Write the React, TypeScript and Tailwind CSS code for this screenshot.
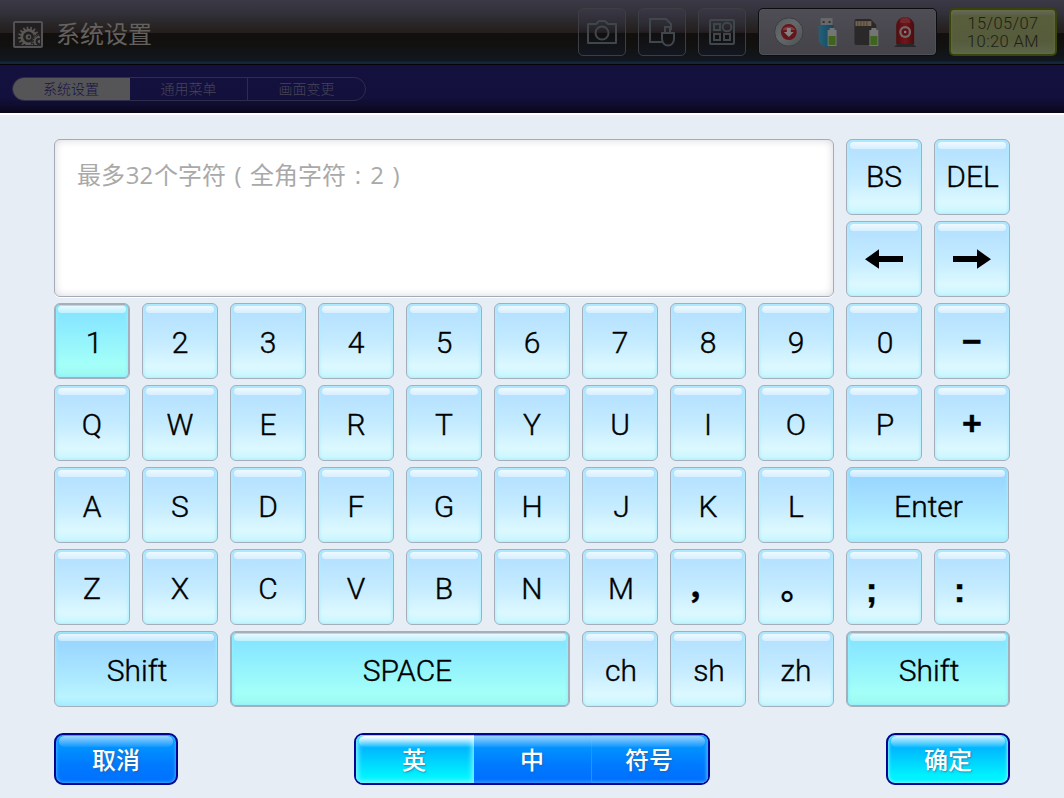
import React from "react";

type Tone = "light" | "blue" | "active";

const keyTone: Record<Tone, string> = {
  light:
    "border-[#a5afbb] bg-[linear-gradient(#aee0ff_0%,#b8e3ff_20%,#c4ebff_50%,#dcf8ff_84%,#c9f7ff_100%)] shadow-[inset_0_0_3px_1px_#aeeeff]",
  blue:
    "border-[#a5afbb] bg-[linear-gradient(#92d5ff_0%,#9dd9ff_22%,#a9e6ff_55%,#baf4ff_88%,#a5edff_100%)] shadow-[inset_0_0_3px_1px_#a3ecff]",
  active:
    "border-[#a5afbb] bg-[linear-gradient(#83e3ff_0%,#8ae9ff_24%,#97f6fb_55%,#a3fff8_82%,#9bf8f1_100%)] shadow-[inset_0_0_0_1px_#a5afbb,inset_0_0_3px_2px_#90f0ff]",
};

function Key({
  children,
  w = "w-[76px]",
  tone = "light",
  text = "pt-1 text-[30px]",
}: {
  children: React.ReactNode;
  w?: string;
  tone?: Tone;
  text?: string;
}) {
  return (
    <button
      className={`relative flex h-[76px] shrink-0 items-center justify-center rounded-[6px] border leading-none text-black [-webkit-text-stroke:0.4px_#000] ${w} ${keyTone[tone]} ${text}`}
    >
      <span className="absolute inset-x-[3px] top-[2px] h-[7px] rounded-[4px] bg-linear-to-b from-white/80 to-white/45" />
      {children}
    </button>
  );
}

function Row({ children }: { children: React.ReactNode }) {
  return <div className="flex gap-3">{children}</div>;
}

function Letters({ value }: { value: string }) {
  return (
    <>
      {value.split("").map((c) => (
        <Key key={c}>{c}</Key>
      ))}
    </>
  );
}

const symbolText = "font-['Liberation_Sans'] font-bold text-[34px] pb-px";

function Arrow({ flip = false }: { flip?: boolean }) {
  return (
    <svg width="38" height="20" viewBox="0 0 38 20" className={flip ? "-scale-x-100" : ""}>
      <path d="M0 10.3 14 0.3V7H38V13H14V19.8Z" fill="#000" />
    </svg>
  );
}

function HeaderButton({ children }: { children: React.ReactNode }) {
  return (
    <button className="flex h-12 w-12 items-center justify-center rounded-[5px] border border-[#3d3e44] bg-[linear-gradient(#3b3846_0%,#2c2a31_35%,#231e20_51%,#110f0f_52%,#141720_100%)]">
      <svg width="48" height="48" viewBox="0 0 48 48" fill="none" stroke="#40474c" strokeWidth="2" className="shrink-0">
        {children}
      </svg>
    </button>
  );
}

function gearPath(cx: number, cy: number, outer: number, inner: number, teeth: number) {
  const pts: string[] = [];
  for (let i = 0; i < teeth; i++) {
    const base = (i / teeth) * Math.PI * 2;
    const step = (Math.PI * 2) / teeth;
    [
      [inner, 0],
      [inner, 0.45],
      [outer, 0.52],
      [outer, 0.93],
    ].forEach(([r, f]) => {
      const a = base + step * f;
      pts.push(`${(cx + r * Math.cos(a)).toFixed(2)} ${(cy + r * Math.sin(a)).toFixed(2)}`);
    });
  }
  return `M${pts.join("L")}Z`;
}

function SettingsIcon() {
  return (
    <svg width="30" height="27" viewBox="0 0 30 27">
      <defs>
        <clipPath id="frame">
          <rect x="3" y="3" width="24" height="21" />
        </clipPath>
      </defs>
      <rect x="1" y="1" width="28" height="25" rx="1" fill="#211f20" stroke="#525256" strokeWidth="2" />
      <g clipPath="url(#frame)">
        <path d={gearPath(15.5, 16, 10.5, 8, 16)} fill="#5a5755" />
        <circle cx="15.5" cy="16" r="5.400" fill="#211f20" />
        <circle cx="15.5" cy="16" r="2.800" fill="#5a5755" />
        <circle cx="16" cy="16" r="1.200" fill="#211f20" />
        <path d={gearPath(26, 20.5, 7.8, 5.7, 12)} fill="#5a5755" stroke="#211f20" strokeWidth="1" />
        <circle cx="26" cy="20.500" r="3.400" fill="#211f20" />
        <circle cx="26.500" cy="20.500" r="1.800" fill="#5a5755" />
      </g>
    </svg>
  );
}

function StatusIcons() {
  return (
    <svg width="178" height="48" viewBox="0 0 178 48">
      <defs>
        <linearGradient id="disc" x1="0" y1="0" x2="1" y2="1">
          <stop offset="0" stopColor="#55585a" />
          <stop offset="0.45" stopColor="#66696b" />
          <stop offset="1" stopColor="#4c4f51" />
        </linearGradient>
        <linearGradient id="usb" x1="0" x2="1">
          <stop offset="0" stopColor="#23607a" />
          <stop offset="1" stopColor="#16465c" />
        </linearGradient>
        <linearGradient id="lamp" x1="0" x2="1">
          <stop offset="0" stopColor="#4f0d10" />
          <stop offset="0.5" stopColor="#74151a" />
          <stop offset="1" stopColor="#4b0b0e" />
        </linearGradient>
      </defs>
      <circle cx="30" cy="23" r="14.3" fill="url(#disc)" stroke="#393c3e" strokeWidth="1" />
      <circle cx="30" cy="23" r="8" fill="#65161b" />
      <path d="M23.5 21a7 5.5 0 0 1 13 0Z" fill="#7e3a3e" />
      <path d="M28 19h4v4h3l-5 5-5-5h3Z" fill="#858082" />

      <path d="M62 9h12v8H62Z" fill="#66686a" />
      <path d="M64 12h2v2h-2ZM70 12h2v2h-2Z" fill="#303236" />
      <path d="M60 16h15v16a7 6 0 0 1-7 6 8 8 0 0 1-8-7Z" fill="url(#usb)" />
      <path d="M71 19h5v2h2v16h-9V21h2Z" fill="#747575" />
      <rect x="70" y="27" width="7" height="9" fill="#3f651d" />

      <path d="M96 12a2 2 0 0 1 2-2h14l6 6v20H98a2 2 0 0 1-2-2Z" fill="#2a2828" />
      <path d="M97 12h16v5H97Z" fill="#73624f" />
      <path d="M99.500 12v5M102.500 12v5M105.500 12v5M108.500 12v5" stroke="#4d4237" strokeWidth="1" />
      <path d="M113 19h5v2h2v16h-9V21h2Z" fill="#747575" />
      <rect x="112" y="27" width="7" height="9" fill="#3f651d" />

      <path d="M138 35V16a9 8 0 0 1 18 0v19Z" fill="url(#lamp)" />
      <path d="M142 12a5 3.500 0 0 1 10 0v2h-10Z" fill="#73282c" />
      <circle cx="147" cy="23" r="6" fill="#73686a" />
      <circle cx="147" cy="23" r="3.700" fill="#5e1216" />
      <circle cx="147" cy="23" r="1.300" fill="#8b8082" />
      <path d="M139 35h16l3 3h-22Z" fill="#28282b" />
    </svg>
  );
}

function Gloss() {
  return (
    <span className="absolute inset-x-[3px] top-[1px] h-[11px] rounded-[6px] bg-linear-to-b from-white/75 to-white/5" />
  );
}

const label =
  "relative top-[1.5px] text-[24px] leading-none font-medium text-white [text-shadow:1px_1px_2px_#30588099]";

export default function App() {
  return (
    <div className="flex h-[798px] w-[1064px] flex-col overflow-hidden bg-[#e6edf5] font-['Roboto','Noto_Sans_CJK_SC',sans-serif]">
      <header className="flex h-[65px] shrink-0 items-start border-b border-[#050507] bg-[linear-gradient(#3a3945_0px,#33323c_12px,#292627_24px,#241e1d_33px,#120f0e_33px,#11110f_45px,#111721_61px,#14273a_62px,#14273a_64px)]">
        <div className="flex flex-1 items-center gap-[13px] pt-4 pl-[13px]">
          <SettingsIcon />
          <h1 className="pt-px text-[24px] leading-[36px] text-[#64615f]">系统设置</h1>
        </div>
        <div className="flex gap-3 pt-2">
          <HeaderButton>
            <path d="M10 16h8l3-3h6l3 3h8v19H10Z" strokeLinejoin="round" />
            <circle cx="24" cy="25" r="6.500" />
          </HeaderButton>
          <HeaderButton>
            <path d="M24 34H12V11h16l5 5v6" />
            <path d="M24 25h12v6a6 6.500 0 0 1-12 0ZM27 25v-6h5v6" />
          </HeaderButton>
          <HeaderButton>
            <rect x="12" y="12" width="24" height="24" rx="1" />
            <path d="M16 16h6v6h-6ZM16 26h6v6h-6ZM26 26h6v6h-6Z" />
            <circle cx="29" cy="19" r="4.300" />
          </HeaderButton>
        </div>
        <div className="mt-2 ml-3 flex h-12 w-[179px] rounded-[5px] border border-[#0c0d10] bg-linear-to-b from-[#4f4d55] to-[#444349] shadow-[inset_0_0_0_1px_#505057]">
          <StatusIcons />
        </div>
        <div className="mt-2 mr-[7px] ml-3 flex h-12 w-[108px] flex-col items-center justify-center rounded-[5px] border-2 border-[#39430c] bg-[linear-gradient(#656855_0px,#5e624c_4px,#585d3b_6px,#565b3b_70%,#5c654a_100%)] pt-[2px] text-[16.5px] leading-[18px] tracking-[0.4px] text-[#1d2016] shadow-[inset_0_0_3px_#68763b]">
          <span className="font-light">15/05/07</span>
          <span className="font-light">10:20 AM</span>
        </div>
      </header>

      <nav className="h-12 shrink-0 bg-[linear-gradient(#15113f_0px,#13103d_32px,#0f0c2c_41px,#08061a_48px)] pt-3 pl-3">
        <div className="flex h-6 w-[354px] overflow-hidden rounded-full border border-[#302c4b] text-[14px] leading-[23px] font-light">
          <span className="-m-px h-6 w-[118px] bg-[#555557] pt-px text-center text-[#151047]">系统设置</span>
          <span className="ml-px w-[118px] border-r border-[#302c4b] text-center text-[#474456]">通用菜单</span>
          <span className="flex-1 text-center text-[#474456]">画面变更</span>
        </div>
      </nav>

      <main className="flex flex-1 flex-col border-t-2 border-white px-[54px] pt-6">
        <div className="flex flex-col gap-[6px] font-light">
          <div className="flex gap-3">
            <div className="h-[158px] w-[780px] rounded-[6px] border border-[#a3aab8] bg-white pt-[18px] pl-[22px] shadow-[inset_0_0_8px_#d5d6de,0_1px_0_#fff]">
              <p className="flex font-['Open_Sans','Noto_Sans_CJK_SC',sans-serif] text-[24px] leading-[34px] font-normal text-[#a9a9a9]">
                最多<span className="w-[29px] text-center">32</span>个字符
                <span className="w-6 text-center">(</span>全角字符
                <span className="w-6 text-center">:</span>
                <span className="w-[14px] text-center">2</span>
                <span className="w-6 text-center">)</span>
              </p>
            </div>
            <div className="flex flex-col gap-[6px]">
              <Row>
                <Key text="text-[30px]">BS</Key>
                <Key text="pl-px text-[30px]">DEL</Key>
              </Row>
              <Row>
                <Key text="">
                  <Arrow />
                </Key>
                <Key text="">
                  <Arrow flip />
                </Key>
              </Row>
            </div>
          </div>
          <Row>
            <Key tone="active" text="pt-1 pl-[4px] text-[30px]">
              1
            </Key>
            <Letters value="23456789" />
            <Key text="pt-1 pl-[2px] text-[30px]">0</Key>
            <Key text={symbolText}>−</Key>
          </Row>
          <Row>
            <Letters value="QWERTYUIO" />
            <Key text="pt-1 pl-[2px] text-[30px]">P</Key>
            <Key text={symbolText}>+</Key>
          </Row>
          <Row>
            <Letters value="ASDFGH" />
            <Key text="pt-1 pl-[3px] text-[30px]">J</Key>
            <Letters value="KL" />
            <Key w="w-[163px]" tone="blue" text="pt-1 pl-[2px] text-[30px]">
              Enter
            </Key>
          </Row>
          <Row>
            <Letters value="ZXCVBN" />
            <Key text="pt-1 pl-[2px] text-[30px]">M</Key>
            <Key text="pr-3 pb-1 font-['Noto_Sans_CJK_SC'] font-bold text-[30px]">，</Key>
            <Key text="pb-1 pl-[3px] font-['Noto_Sans_CJK_SC'] font-medium text-[34px]">。</Key>
            <Key text="pr-[25px] pt-1 font-['Liberation_Sans'] font-bold text-[35px]">;</Key>
            <Key text="pr-[25px] pt-1 font-['Liberation_Sans'] font-bold text-[35px]">:</Key>
          </Row>
          <Row>
            <Key w="w-[164px]" tone="blue" text="pt-1 pl-[2px] text-[30px]">
              Shift
            </Key>
            <Key w="w-[340px]" tone="active" text="pt-1 pl-[15px] text-[30px]">
              SPACE
            </Key>
            <Key text="pt-1 pl-[2px] text-[30px]">ch</Key>
            <Key text="pt-1 pl-[2px] text-[30px]">sh</Key>
            <Key>zh</Key>
            <Key w="w-[164px]" tone="active" text="pt-1 pl-[2px] text-[30px]">
              Shift
            </Key>
          </Row>
        </div>

        <footer className="mt-[26px] flex h-[52px] w-[956px] justify-between">
          <button className="relative flex w-[124px] items-center justify-center rounded-[9px] border-2 border-[#00058e] bg-[linear-gradient(#159dff_0%,#0090ff_28%,#007aff_62%,#0070ff_100%)] shadow-[inset_0_0_3px_1px_#36adff]">
            <span className="absolute inset-x-[3px] top-[1px] h-[11px] rounded-[6px] bg-linear-to-b from-white/55 to-white/5" />
            <span className={label}>取消</span>
          </button>
          <div className="relative flex w-[356px] overflow-hidden rounded-[9px] border-2 border-[#00058e]">
            <button className="flex w-[118px] items-center justify-center bg-[linear-gradient(#33c4ff_0%,#00b8ff_28%,#00f2ff_85%,#00f2ff_100%)] pr-[2px] shadow-[inset_0_0_5px_2px_#80f5ff]">
              <span className={label}>英</span>
            </button>
            <button className="flex w-[118px] items-center justify-center border-r border-[#2196f8] bg-[linear-gradient(#159dff_0%,#0090ff_30%,#007aff_62%,#0070ff_92%,#2b92ff_100%)] pr-px">
              <span className={label}>中</span>
            </button>
            <button className="flex flex-1 items-center justify-center bg-[linear-gradient(#159dff_0%,#0090ff_30%,#007aff_62%,#0070ff_92%,#2b92ff_100%)] pr-[2px] shadow-[inset_-2px_0_3px_#36adff]">
              <span className={label}>符号</span>
            </button>
            <div className="absolute inset-x-[3px] top-[1px] flex h-[11px] overflow-hidden rounded-[6px]">
              <span className="w-[115px] bg-linear-to-b from-white to-white/5" />
              <span className="flex-1 bg-linear-to-b from-white/55 to-white/5" />
            </div>
          </div>
          <button className="relative flex w-[124px] items-center justify-center rounded-[9px] border-2 border-[#00058e] bg-[linear-gradient(#33c4ff_0%,#00b8ff_28%,#00f2ff_85%,#00f2ff_100%)] shadow-[inset_0_0_3px_1px_#80f5ff]">
            <Gloss />
            <span className={label}>确定</span>
          </button>
        </footer>
      </main>
    </div>
  );
}
